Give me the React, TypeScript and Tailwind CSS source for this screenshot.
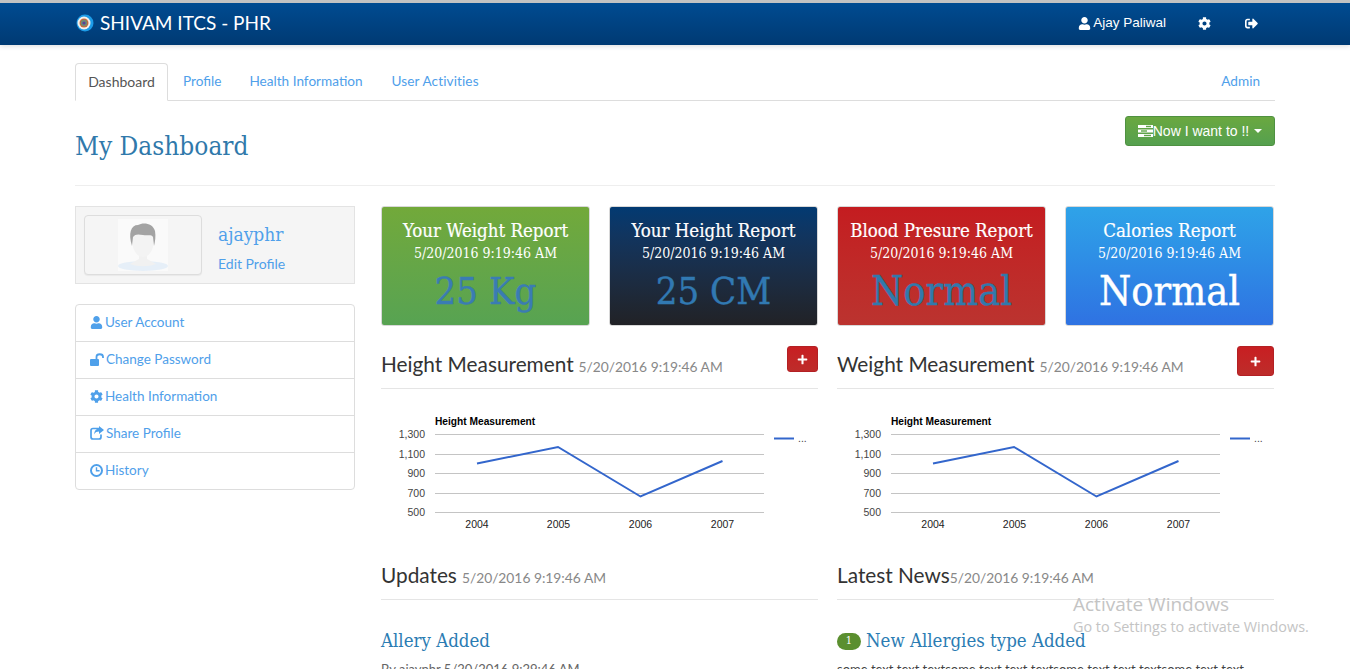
import React from 'react';
import { FaUser, FaCog, FaSignOutAlt, FaPlus } from 'react-icons/fa';

const stamp = '5/20/2016 9:19:46 AM';
const slab = "font-['DejaVu_Serif_Condensed','DejaVu_Serif',serif]";

const cards = [
  { title: 'Your Weight Report', value: '25 Kg', size: 'text-[38px]', bg: 'bg-gradient-to-b from-[#72a93a] to-[#57a352]', text: 'text-[#3a7cb3]' },
  { title: 'Your Height Report', value: '25 CM', size: 'text-[38px]', bg: 'bg-gradient-to-b from-[#023a72] to-[#212226]', text: 'text-[#3179b2]' },
  { title: 'Blood Presure Report', value: 'Normal', size: 'text-[41px]', bg: 'bg-gradient-to-b from-[#c41c20] to-[#bb332f]', text: 'text-[#3179ab]' },
  { title: 'Calories Report', value: 'Normal', size: 'text-[41px]', bg: 'bg-gradient-to-b from-[#2fa3e8] to-[#2f72e2]', text: 'text-white' },
];

const UnlockIcon = () => (
  <svg width="14" height="13" viewBox="0 0 14 13" fill="currentColor">
    <rect x="0" y="6" width="9" height="7" rx="1" />
    <path d="M6.5 6.5 V3.8 C6.5 0.4 13 0.4 13 3.8 V5" fill="none" stroke="currentColor" strokeWidth="1.8" />
  </svg>
);

const ShareIcon = () => (
  <svg width="14" height="14" viewBox="0 0 14 14" fill="currentColor">
    <path d="M9 2.5 H3 C2 2.5 1 3.4 1 4.5 V11 C1 12.1 2 13 3 13 H9 C10 13 11 12.1 11 11 V8.5" fill="none" stroke="currentColor" strokeWidth="1.7" />
    <path d="M9 0 L14 4 L9 8 V5.6 C7 5.6 5.2 6.2 4.2 8.6 C4.2 5 6 2.8 9 2.6 Z" />
  </svg>
);

const ClockIcon = () => (
  <svg width="13" height="13" viewBox="0 0 13 13" fill="none" stroke="currentColor">
    <circle cx="6.5" cy="6.5" r="5.5" strokeWidth="2" />
    <path d="M6.5 3.2 V6.8 H9.6" strokeWidth="1.4" />
  </svg>
);

const sideLinks = [
  { label: 'User Account', icon: <FaUser className="w-[13px] h-[13px]" /> },
  { label: 'Change Password', icon: <UnlockIcon /> },
  { label: 'Health Information', icon: <FaCog className="w-[13px] h-[13px]" /> },
  { label: 'Share Profile', icon: <ShareIcon /> },
  { label: 'History', icon: <ClockIcon /> },
];

// Coordinates are relative to the top left of the 437px chart block
const Chart = ({ title }: { title: string }) => {
  const grid = [
    { y: 34, label: '1,300' },
    { y: 54, label: '1,100' },
    { y: 73, label: '900' },
    { y: 93, label: '700' },
    { y: 112, label: '500' },
  ];
  const years = [
    { x: 96, label: '2004' },
    { x: 177.5, label: '2005' },
    { x: 259.5, label: '2006' },
    { x: 341.5, label: '2007' },
  ];
  return (
    <svg width="437" height="159" className="mt-[11px] block font-['Liberation_Sans',sans-serif]">
      <text x="54" y="25" fontSize="10.2" fontWeight="bold" fill="#000">{title}</text>
      {grid.map((g) => (
        <g key={g.y}>
          <line x1="54" x2="383" y1={g.y + 0.5} y2={g.y + 0.5} stroke="#c4c4c4" />
          <text x="44" y={g.y + 4} fontSize="10.5" textAnchor="end" fill="#444">{g.label}</text>
        </g>
      ))}
      <polyline points="96,63.5 177,47 259.5,96.5 341.5,61" fill="none" stroke="#3366cc" strokeWidth="2" />
      {years.map((y) => (
        <text key={y.x} x={y.x} y="128" fontSize="10.5" textAnchor="middle" fill="#222">{y.label}</text>
      ))}
      <line x1="393" x2="413" y1="38.5" y2="38.5" stroke="#3366cc" strokeWidth="2" />
      <text x="417" y="42" fontSize="10.5" fill="#444">...</text>
    </svg>
  );
};

const SectionTitle = ({ title, date, size }: { title: string; date: string; size?: string }) => (
  <h3 className="text-[20.8px] leading-none text-[#333] whitespace-nowrap">
    {title}
    <span className={`text-[13.8px] text-[#888] ${size ?? 'ml-[5px]'}`}>{date}</span>
  </h3>
);

export default function App() {
  return (
    <div className="relative h-[669px] overflow-hidden bg-white font-['Lato',sans-serif] text-[13.5px] text-[#555]">
      {/* Navbar */}
      <div className="h-[45px] border-t-[3px] border-[#c2c2c2] bg-gradient-to-b from-[#004b91] to-[#003a73] pb-[2px] shadow-[0_1px_5px_rgba(0,0,0,0.15)]">
        <div className="mx-auto flex h-full w-[1200px] items-center text-white">
          <svg width="18" height="18" viewBox="0 0 18 18" className="ml-px shrink-0">
            <circle cx="9" cy="9" r="8.5" fill="#1c9ce8" />
            <circle cx="8" cy="9" r="6.5" fill="#f4f1ec" />
            <circle cx="8" cy="9" r="4.5" fill="#c8683a" />
            <circle cx="8" cy="9" r="3.2" fill="#6f8a72" />
            <circle cx="8" cy="9" r="1.6" fill="#5a3f9a" />
          </svg>
          <span className="ml-[6px] text-[19px]">SHIVAM ITCS - PHR</span>
          <div className="ml-auto flex items-center pr-[17px] font-['Liberation_Sans',sans-serif] text-[13.5px]">
            <FaUser className="h-[13px] w-[13px]" />
            <span className="ml-[2px]">Ajay Paliwal</span>
            <FaCog className="ml-[32px] h-[13px] w-[13px]" />
            <FaSignOutAlt className="ml-[34px] h-[13px] w-[13px]" />
          </div>
        </div>
      </div>

      {/* Page */}
      <div className="mx-auto w-[1200px]">
        <div className="mt-[18px] flex h-[38px] items-stretch border-b border-[#ddd] pb-px text-[13.6px] text-[#4fa0ea]">
          <div className="-mb-[2px] flex w-[93px] items-center justify-center rounded-t border border-b-white border-[#ddd] bg-white pb-px text-[14px] text-[#555]">Dashboard</div>
          <div className="ml-[15px] flex items-center">Profile</div>
          <div className="ml-[28px] flex items-center">Health Information</div>
          <div className="ml-[29px] flex items-center tracking-[0.1px]">User Activities</div>
          <div className="ml-auto flex items-center pr-[15px]">Admin</div>
        </div>

        <div className="flex h-[85px] items-start justify-between border-b border-[#eee] pt-[15px]">
          <h1 className={`${slab} mt-[17px] text-[26px] leading-none text-[#3079ab]`}>My Dashboard</h1>
          <button className="flex h-[30px] w-[150px] items-center justify-center rounded-[3px] border border-[#4f9141] bg-gradient-to-b from-[#6aa83f] to-[#55a04f] font-['Liberation_Sans',sans-serif] text-[14px] text-white">
            <svg width="15" height="12" viewBox="0 0 15 12" fill="currentColor">
              <rect width="15" height="3" />
              <rect y="4.5" width="15" height="3" />
              <rect y="9" width="15" height="3" />
              <rect x="8" y="0.8" width="5" height="1.4" fill="#5fa548" />
              <rect x="3" y="5.3" width="6" height="1.4" fill="#5fa548" />
              <rect x="6" y="9.8" width="7" height="1.4" fill="#5fa548" />
            </svg>
            <span>Now I want to !!</span>
            <span className="ml-[5px] h-0 w-0 border-x-[4px] border-t-[4px] border-x-transparent border-t-white" />
          </button>
        </div>

        <div className="mt-[20px] flex gap-[26px]">
          {/* Left column */}
          <div className="w-[280px] shrink-0">
            <div className="flex h-[78px] items-center border border-[#e3e3e3] bg-[#f5f5f5] pl-[8px]">
              <div className="flex h-[60px] w-[118px] items-center justify-center rounded border border-[#ddd] bg-[#f5f5f5] shadow-[0_1px_1px_rgba(0,0,0,0.05)]">
                <svg width="50" height="52" viewBox="0 0 50 52">
                  <rect width="50" height="52" fill="#fafafa" />
                  <ellipse cx="25" cy="47" rx="25" ry="5" fill="#e6eff8" />
                  <path d="M21 34 H29 V40 L38 45 C30 48 20 48 12 45 L21 40 Z" fill="#f1f1f1" />
                  <path d="M14 18 C14 8 36 8 36 18 L35 28 C33 35 29 38 25 38 C21 38 17 35 15 28 Z" fill="#f3f3f3" />
                  <path d="M14 27 C10 14 13 6 20 6 C25 3 35 4 37 12 C38 17 37 23 36 27 L35 18 C33 15 30 17 25 16 C20 15 17 15 15 18 Z" fill="#a3a3a3" />
                </svg>
              </div>
              <div className="ml-[16px] pt-[6px]">
                <div className={`${slab} text-[19px] leading-none text-[#4fa0ea]`}>ajayphr</div>
                <div className="mt-[13px] text-[14px] leading-none text-[#4fa0ea]">Edit Profile</div>
              </div>
            </div>

            <div className="mt-[20px] overflow-hidden rounded border border-[#ddd] bg-white text-[#4fa0ea]">
              {sideLinks.map((link, i) => (
                <div key={link.label} className={`flex items-center gap-[2px] pb-[2px] pl-[14px] ${i > 0 ? 'h-[37px] border-t border-[#ddd]' : 'h-[36px]'}`}>
                  {link.icon}
                  <span>{link.label}</span>
                </div>
              ))}
            </div>
          </div>

          {/* Right column */}
          <div className="min-w-0 flex-1">
            <div className="grid grid-cols-[209px_209px_209px_209px] gap-[19px]">
              {cards.map((c) => (
                <div key={c.title} className={`h-[120px] rounded-[3px] border border-[#d8d8d8] pt-[13px] text-center text-white ${c.bg}`}>
                  <div className={`${slab} whitespace-nowrap text-[18.5px] leading-[22px] [-webkit-text-stroke:0.2px]`}>{c.title}</div>
                  <div className={`${slab} pt-px text-[14px] leading-[20px]`}>{stamp}</div>
                  <div className={`${slab} mt-[3px] leading-[50px] [-webkit-text-stroke:0.4px] ${c.size} ${c.text}`}>{c.value}</div>
                </div>
              ))}
            </div>

            <div className="mt-[20px] grid grid-cols-[437px_437px] gap-[19px]">
              <div>
                <div className="flex h-[43px] items-start justify-between border-b border-[#e5e5e5]">
                  <div className="pt-[8px]"><SectionTitle title="Height Measurement" date={stamp} /></div>
                  <button className="flex h-[26px] w-[31px] items-center justify-center rounded-[3px] border border-[#b32024] bg-gradient-to-b from-[#c81e22] to-[#bd2c2a] text-white">
                    <FaPlus className="h-[11px] w-[11px]" />
                  </button>
                </div>
                <Chart title="Height Measurement" />
              </div>
              <div>
                <div className="flex h-[43px] items-start justify-between border-b border-[#e5e5e5]">
                  <div className="pt-[8px]"><SectionTitle title="Weight Measurement" date={stamp} /></div>
                  <button className="flex h-[30px] w-[37px] items-center justify-center rounded-[3px] border border-[#b32024] bg-gradient-to-b from-[#c81e22] to-[#bd2c2a] text-white">
                    <FaPlus className="h-[11px] w-[11px]" />
                  </button>
                </div>
                <Chart title="Height Measurement" />
              </div>
              <div className="-mt-[19px]">
                <div className="flex h-[41px] items-start border-b border-[#e5e5e5] pt-[6px]">
                  <SectionTitle title="Updates" date={stamp} />
                </div>
                <div className={`${slab} mt-[30px] text-[18.5px] leading-[22px] text-[#2b7cb3]`}>Allery Added</div>
                <div className="mt-[8px] text-[13px] leading-[18px] text-[#666]">By ajayphr 5/20/2016 9:29:46 AM</div>
              </div>
              <div className="-mt-[19px]">
                <div className="flex h-[41px] items-start border-b border-[#e5e5e5] pt-[6px]">
                  <SectionTitle title="Latest News" date={stamp} size="ml-0" />
                </div>
                <div className="mt-[30px] flex h-[22px] items-center">
                  <span className={`${slab} flex h-[17px] w-[24px] items-center justify-center rounded-full bg-[#5b8f2f] text-[11px] text-white`}>1</span>
                  <span className={`${slab} ml-[5px] text-[18.5px] leading-[22px] text-[#2b7cb3]`}>New Allergies type Added</span>
                </div>
                <div className="mt-[8px] whitespace-nowrap text-[13px] leading-[18px] text-[#444]">some text text textsome text text textsome text text textsome text text</div>
              </div>
            </div>
          </div>
        </div>
      </div>

      {/* Windows watermark */}
      <div className="absolute left-[1073px] top-[593px] font-['Open_Sans',sans-serif] text-[#c4c4c4]">
        <div className="text-[19px] leading-[22px]">Activate Windows</div>
        <div className="mt-[2px] text-[14.4px] leading-[20px]">Go to Settings to activate Windows.</div>
      </div>
    </div>
  );
}
